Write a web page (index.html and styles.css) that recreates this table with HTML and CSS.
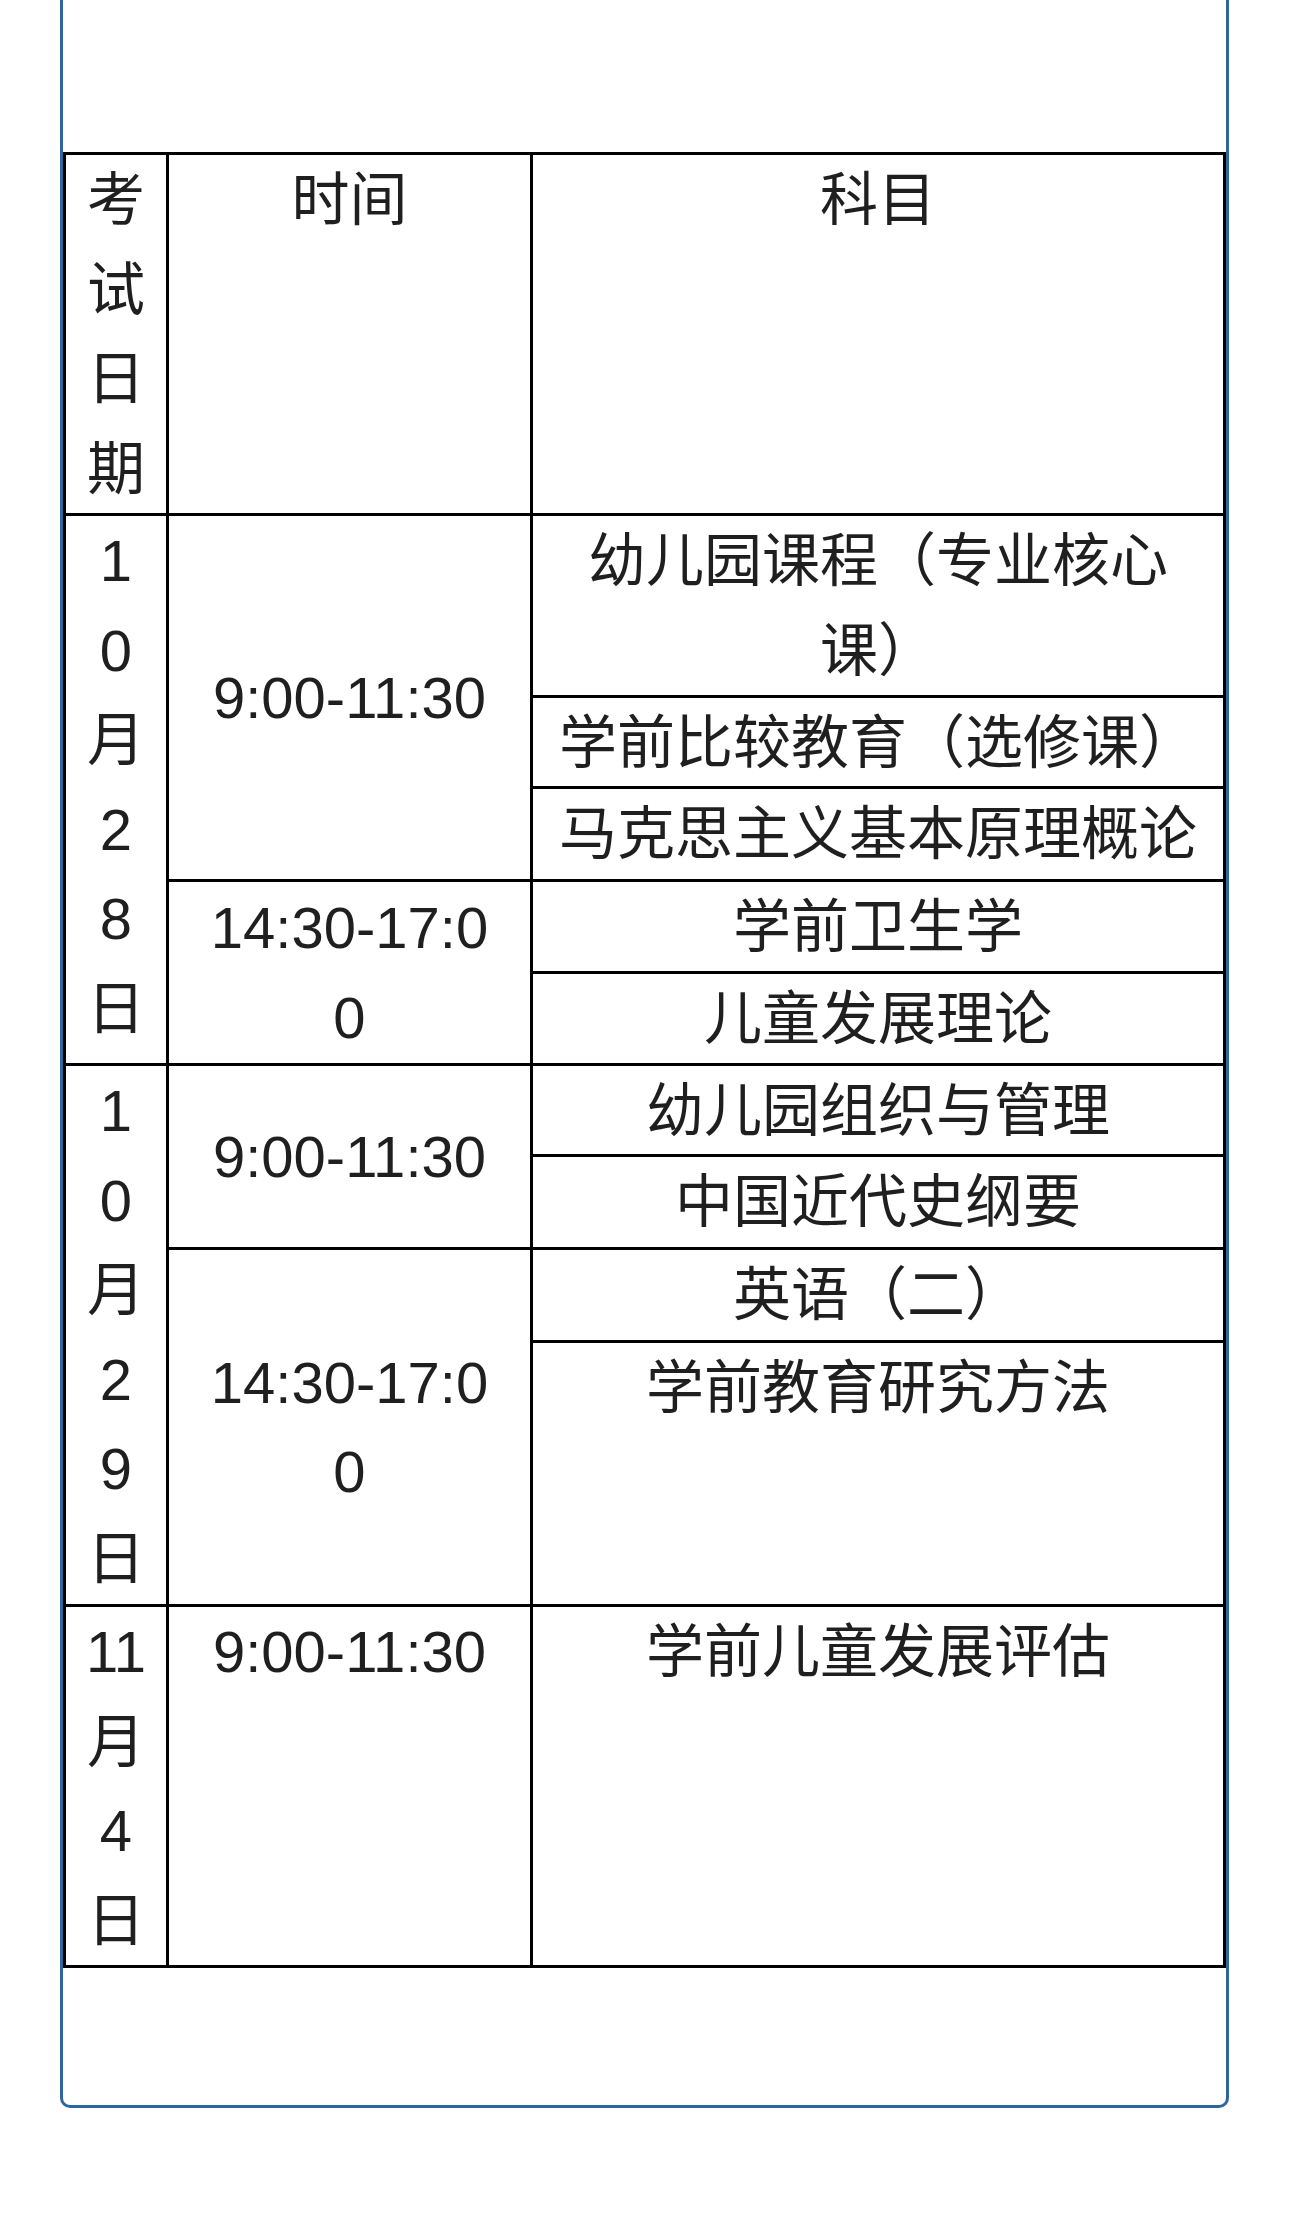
FILE: index.html
```html
<!DOCTYPE html>
<html lang="zh-CN">
<head>
<meta charset="utf-8">
<title>考试安排</title>
<link rel="stylesheet" href="styles.css">
</head>
<body>
<div class="card">
  <div class="schedule">
    <div class="cell top">考<br>试<br>日<br>期</div>
    <div class="cell top">时间</div>
    <div class="cell top">科目</div>

    <div class="cell top span-5">1<br>0<br>月<br>2<br>8<br>日</div>
    <div class="cell mid span-3">9:00-11:30</div>
    <div class="cell top">幼儿园课程（专业核心<br>课）</div>
    <div class="cell top">学前比较教育（选修课）</div>
    <div class="cell top">马克思主义基本原理概论</div>
    <div class="cell mid span-2">14:30-17:0<br>0</div>
    <div class="cell top">学前卫生学</div>
    <div class="cell top">儿童发展理论</div>

    <div class="cell top span-4">1<br>0<br>月<br>2<br>9<br>日</div>
    <div class="cell mid span-2">9:00-11:30</div>
    <div class="cell top">幼儿园组织与管理</div>
    <div class="cell top">中国近代史纲要</div>
    <div class="cell mid span-2">14:30-17:0<br>0</div>
    <div class="cell top">英语（二）</div>
    <div class="cell top">学前教育研究方法</div>

    <div class="cell top">11<br>月<br>4<br>日</div>
    <div class="cell top">9:00-11:30</div>
    <div class="cell top">学前儿童发展评估</div>
  </div>
</div>
</body>
</html>
```

FILE: styles.css
```css
html, body {
  margin: 0;
  padding: 0;
  background: #ffffff;
}

body {
  width: 1290px;
  min-height: 2230px;
  font-family: "Liberation Sans", "Noto Sans CJK SC", sans-serif;
  color: #1f1f1f;
}

.card {
  box-sizing: border-box;
  width: 1169px;
  margin-left: 60px;
  padding: 152px 0 137px 0;
  border: 3px solid #2e66a0;
  border-top: none;
  border-radius: 0 0 10px 10px;
  background: #ffffff;
}

.schedule {
  display: grid;
  grid-template-columns: 100px 361px 1fr;
  grid-template-rows: 358px 179px 88px 90px 89px 89px 88px 90px 90px 261px 358px;
  gap: 3px;
  padding: 3px;
  background: #000000;
}

.cell {
  display: flex;
  flex-direction: column;
  align-items: center;
  background: #ffffff;
  font-size: 58px;
  line-height: 89.5px;
  text-align: center;
  overflow: hidden;
}

.top {
  justify-content: flex-start;
}

.mid {
  justify-content: center;
}

.span-2 { grid-row: span 2; }
.span-3 { grid-row: span 3; }
.span-4 { grid-row: span 4; }
.span-5 { grid-row: span 5; }
```
